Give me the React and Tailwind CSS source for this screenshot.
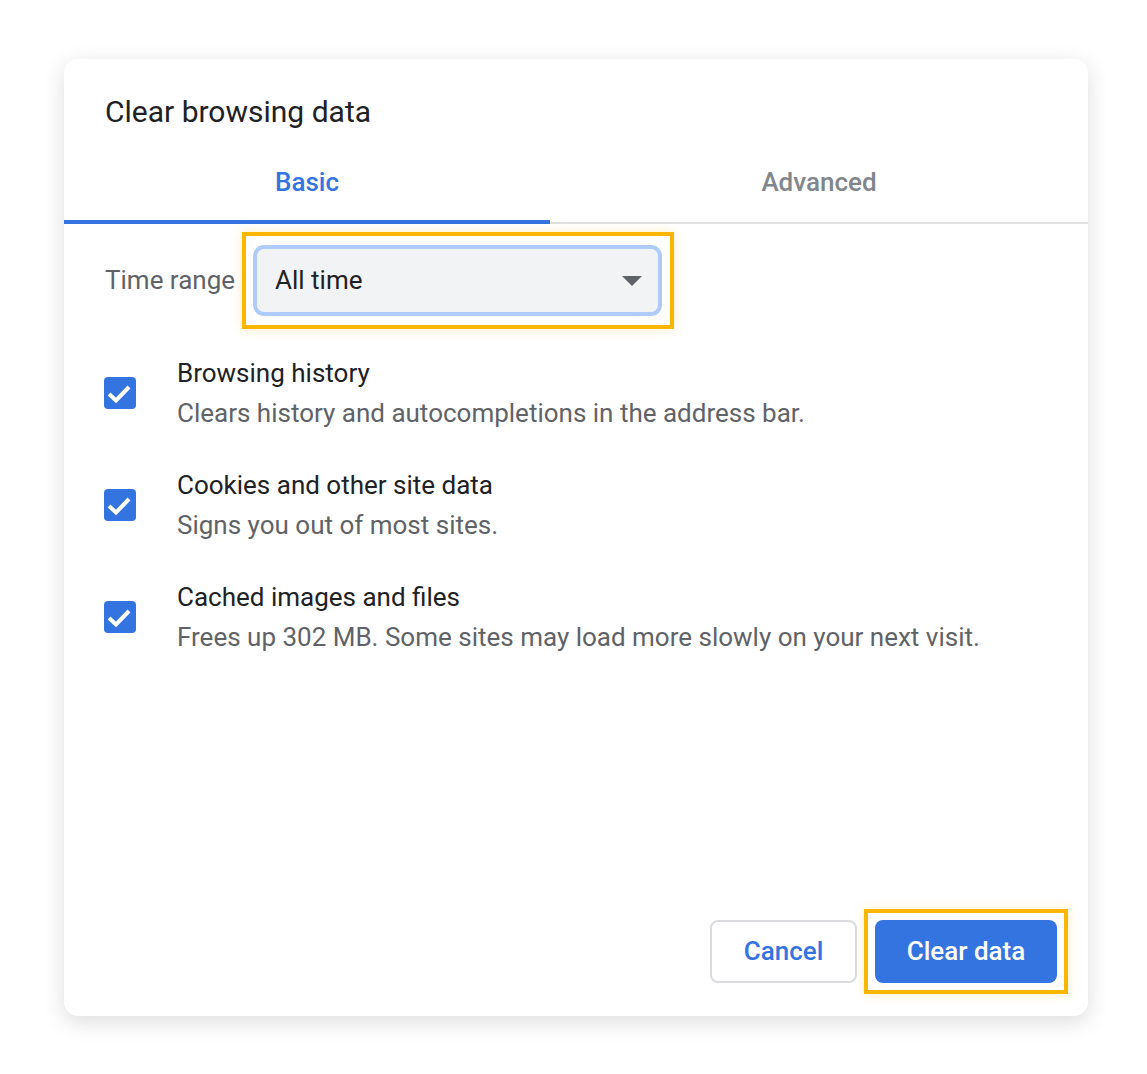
import React from "react";

function Check() {
  return (
    <div className="w-[32px] h-[32px] shrink-0 rounded-[4px] bg-[#3474e0] flex items-center justify-center -ml-px mr-[41px]">
      <svg width="32" height="32" viewBox="0 0 32 32">
        <polyline points="5,17 12,23.5 25,10" fill="none" stroke="#ffffff" strokeWidth="4" strokeLinecap="butt" strokeLinejoin="miter" />
      </svg>
    </div>
  );
}

function Row({ title, sub }) {
  return (
    <div className="flex items-center">
      <Check />
      <div className="flex flex-col">
        <div className="text-[26px] leading-[40px] text-[#202124]">{title}</div>
        <div className="text-[26px] leading-[40px] text-[#5f6368]">{sub}</div>
      </div>
    </div>
  );
}

export default function App() {
  return (
    <div className="w-[1147px] h-[1074px] bg-white pt-[59px] pl-[64px]" style={{ fontFamily: "Roboto, 'Noto Sans', sans-serif" }}>
      <div className="w-[1024px] h-[957px] bg-white rounded-[14px] shadow-[0_6px_22px_rgba(0,0,0,0.14)] flex flex-col">
        <div className="pl-[41px] pt-[37px] text-[30px] leading-[32px] text-[#202124]">Clear browsing data</div>
        <div className="mt-[17px] flex border-b-2 border-[#e0e0e0]">
          <div className="w-[486px] h-[79px] -mb-[2px] border-b-[4px] border-[#3474e0] flex items-center justify-center text-[26px] font-medium text-[#3474e0]">
            Basic
          </div>
          <div className="flex-1 flex items-center justify-center pb-[2px] text-[26px] font-medium text-[#80868b]">
            Advanced
          </div>
        </div>
        <div className="mt-[8px] pl-[41px] flex items-center">
          <div className="w-[137px] shrink-0 whitespace-nowrap text-[26px] text-[#5f6368]">Time range</div>
          <div className="border-[4px] border-[#fbb700] pl-[7px] pr-[8px] py-[9px] shadow-[0_0_10px_rgba(251,183,0,0.25)]">
            <div className="w-[409px] h-[71px] rounded-[11px] border-[4px] border-[#aecbfa] bg-[#f1f3f4] flex items-center justify-between pl-[18px] pr-[16px]">
              <span className="text-[26px] text-[#202124]">All time</span>
              <svg width="20" height="10" viewBox="0 0 20 10">
                <polygon points="0,0 20,0 10,10" fill="#5f6368" />
              </svg>
            </div>
          </div>
        </div>
        <div className="mt-[24px] pl-[41px] flex flex-col gap-[32px]">
          <Row title="Browsing history" sub="Clears history and autocompletions in the address bar." />
          <Row title="Cookies and other site data" sub="Signs you out of most sites." />
          <Row title="Cached images and files" sub="Frees up 302 MB. Some sites may load more slowly on your next visit." />
        </div>
        <div className="mt-auto pb-[22px] pr-[20px] flex items-center justify-end gap-[7px]">
          <button className="w-[147px] h-[63px] rounded-[8px] border-2 border-[#dadce0] bg-white text-[26px] font-medium text-[#3474e0]">
            Cancel
          </button>
          <div className="border-[4px] border-[#fbb700] p-[7px] shadow-[0_0_10px_rgba(251,183,0,0.25)]">
            <button className="w-[182px] h-[63px] rounded-[8px] bg-[#3474e0] text-[26px] font-medium text-white">
              Clear data
            </button>
          </div>
        </div>
      </div>
    </div>
  );
}
